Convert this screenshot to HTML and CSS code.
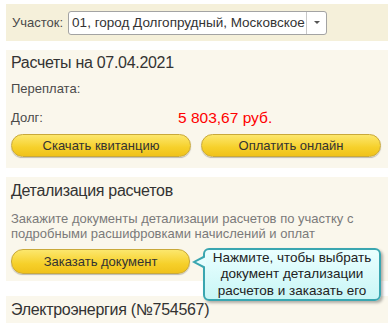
FILE: index.html
```html
<!DOCTYPE html>
<html lang="ru">
<head>
  <meta charset="UTF-8">
  <meta name="viewport" content="width=device-width, initial-scale=1.0">
  <title>Расчеты по участку</title>
  <link rel="stylesheet" href="styles.css">
</head>
<body>
  <div class="panel panel-top">
    <label class="lbl" for="uchastok">Участок:</label>
    <div class="combo" id="uchastok">
      <div class="combo-text">01, город Долгопрудный, Московское</div>
      <div class="combo-btn"><span class="arrow"></span></div>
    </div>
  </div>

  <div class="panel panel-calc">
    <h2>Расчеты на 07.04.2021</h2>
    <div class="row">
      <span class="row-label">Переплата:</span>
    </div>
    <div class="row">
      <span class="row-label">Долг:</span>
      <span class="debt">5 803,67 руб.</span>
    </div>
    <div class="buttons">
      <button class="btn">Скачать квитанцию</button>
      <button class="btn">Оплатить онлайн</button>
    </div>
  </div>

  <div class="panel panel-detail">
    <h2>Детализация расчетов</h2>
    <p class="hint">Закажите документы детализации расчетов по участку с подробными расшифровками начислений и оплат</p>
    <div class="buttons order-row">
      <button class="btn">Заказать документ</button>
      <div class="tip">Нажмите, чтобы выбрать документ детализации расчетов и заказать его</div>
    </div>
  </div>

  <div class="panel panel-elec">
    <h2>Электроэнергия (№754567)</h2>
  </div>
</body>
</html>
```

FILE: styles.css
```css
html, body {
  margin: 0;
  background: #ffffff;
}
body {
  font-family: "Liberation Sans", Arial, sans-serif;
  padding: 4px 0 0 6px;
  overflow: hidden;
}
.panel {
  background: #faf7ec;
  padding: 0 7px 0 5px;
}
.panel-top {
  background: #f5f0da;
  height: 37px;
  display: flex;
  align-items: center;
  padding-left: 6px;
  margin-bottom: 9px;
}
.lbl {
  font-size: 13px;
  color: #4a4a4a;
  margin-right: 5px;
}
.combo {
  display: flex;
  width: 257px;
  height: 22px;
  border: 1px solid #a3a3a3;
  border-radius: 3px;
  background: #fff;
}
.combo-text {
  flex: 1;
  white-space: nowrap;
  font-size: 13.5px;
  line-height: 22px;
  color: #333;
  padding-left: 3px;
  border-right: 1px solid #c8c8c8;
}
.combo-btn {
  width: 19px;
  display: flex;
  align-items: center;
  justify-content: center;
}
.arrow {
  width: 0;
  height: 0;
  border-left: 3px solid transparent;
  border-right: 3px solid transparent;
  border-top: 3px solid #555;
}
h2 {
  margin: 0;
  font-weight: normal;
  font-size: 16px;
  letter-spacing: -0.3px;
  color: #333;
  padding-top: 3px;
  line-height: 22px;
}
.panel-calc {
  height: 118px;
  margin-bottom: 9px;
}
.panel-calc h2 {
  padding-top: 2px;
}
.row {
  display: flex;
  font-size: 13px;
  color: #4a4a4a;
  height: 29px;
  align-items: center;
}
.row-label {
  width: 167px;
}
.debt {
  color: #f00;
  font-size: 15.5px;
}
.buttons {
  display: flex;
  gap: 10px;
  margin-top: 2px;
}
.btn {
  width: 180px;
  height: 23px;
  border: 1px solid #c9a93a;
  border-radius: 12px;
  background: linear-gradient(to bottom, #fce76d, #f6d02a 60%, #f0c21a);
  box-shadow: 0 1px 1px rgba(0,0,0,0.25);
  font-family: inherit;
  font-size: 13px;
  color: #333;
  padding: 0;
  cursor: pointer;
}
.panel-detail {
  height: 104px;
  margin-bottom: 15px;
}
.hint {
  margin: 9px 0 0;
  font-size: 13px;
  line-height: 15px;
  color: #7a7a7a;
}
.order-row {
  position: relative;
  margin-top: 8px;
}
.order-row .btn {
  height: 25px;
  width: 179px;
}
.tip {
  position: absolute;
  left: 192px;
  top: -1px;
  width: 174px;
  height: 49px;
  border: 2px solid #3aa6b0;
  border-radius: 6px;
  background: linear-gradient(to bottom, #eaffff, #c9f6f6);
  box-shadow: 2px 2px 3px rgba(0,0,0,0.3);
  font-size: 13.5px;
  line-height: 16.5px;
  color: #222;
  text-align: center;
  display: flex;
  align-items: center;
  justify-content: center;
}
.tip::before {
  content: "";
  position: absolute;
  left: -13px;
  top: 5px;
  border-top: 7px solid transparent;
  border-bottom: 7px solid transparent;
  border-right: 13px solid #3aa6b0;
}
.tip::after {
  content: "";
  position: absolute;
  left: -9px;
  top: 7px;
  border-top: 5px solid transparent;
  border-bottom: 5px solid transparent;
  border-right: 10px solid #e6fefe;
}
.panel-elec {
  height: 40px;
}
```
